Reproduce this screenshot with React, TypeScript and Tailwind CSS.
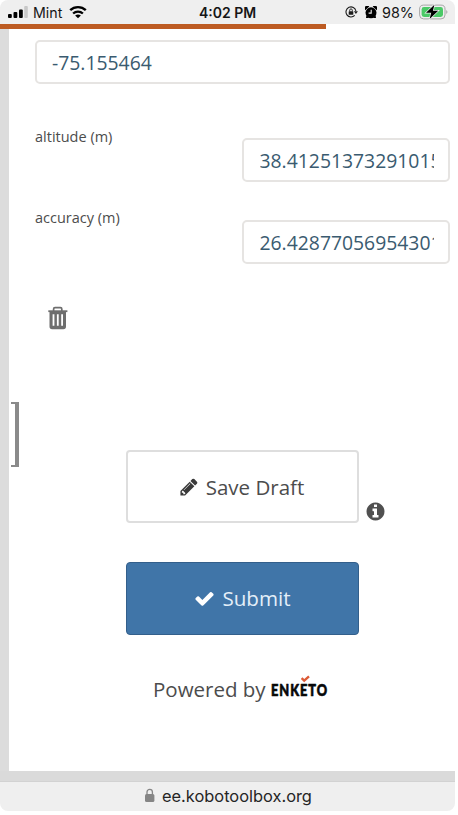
import type { ReactNode } from 'react';

function FaGlyph({ d, className }: { d: string; className: string }) {
  return (
    <svg viewBox="0 0 1792 1792" fill="currentColor" className={className}>
      <path d={d} />
    </svg>
  );
}

const PENCIL =
  'M491 1536l91-91-235-235-91 91v107h128v128h107zm523-928q0-22-22-22-10 0-17 7l-542 542q-7 7-7 17 0 22 22 22 10 0 17-7l542-542q7-7 7-17zm-54-192l416 416-832 832h-416v-416zm683 96q0 53-37 90l-166 166-416-416 166-165q36-38 90-38 53 0 91 38l235 234q37 39 37 91z';
const CHECK =
  'M1671 566q0 40-28 68l-724 724-136 136q-28 28-68 28t-68-28l-136-136-362-362q-28-28-28-68t28-68l136-136q28-28 68-28t68 28l294 295 656-657q28-28 68-28t68 28l136 136q28 28 28 68z';
const INFO =
  'M1152 1376v-160q0-14-9-23t-23-9h-96v-512q0-14-9-23t-23-9h-320q-14 0-23 9t-9 23v160q0 14 9 23t23 9h96v320h-96q-14 0-23 9t-9 23v160q0 14 9 23t23 9h448q14 0 23-9t9-23zm-128-896v-160q0-14-9-23t-23-9h-192q-14 0-23 9t-9 23v160q0 14 9 23t23 9h192q14 0 23-9t9-23zm640 416q0 209-103 385.5t-279.5 279.5-385.5 103-385.5-103-279.5-279.5-103-385.5 103-385.5 279.5-279.5 385.5-103 385.5 103 279.5 279.5 103 385.5z';

function StatusBar() {
  return (
    <header className="flex h-6 items-center rounded-t-lg bg-[#efefef] font-['Inter',sans-serif] text-[#161616]">
      <svg width="20" height="12" viewBox="0 0 20 12" className="ml-2">
        <rect x="0" y="8" width="3.8" height="4" rx="1" />
        <rect x="5.5" y="6" width="3.8" height="6" rx="1" />
        <rect x="11" y="3.5" width="3.8" height="8.5" rx="1" />
        <rect x="16.2" y="0" width="3.6" height="12" rx="1" fill="#c8c8c8" />
      </svg>
      <span className="ml-[5px] w-[30px] pt-px text-[14.2px] leading-6 whitespace-nowrap">Mint</span>
      <svg width="18" height="14" viewBox="0 0 18 14" fill="none" stroke="#000" className="ml-[6px]">
        <path d="M1.2 5.2a11.4 11.4 0 0 1 15.6 0" strokeWidth="2.4" />
        <path d="M4.1 8.5a7.2 7.2 0 0 1 9.8 0" strokeWidth="2.3" />
        <path d="M9 13.2 6.1 10.6a4.5 4.5 0 0 1 5.8 0z" fill="#000" stroke="none" />
      </svg>
      <span className="ml-[112px] w-[60px] pt-px text-[14px] font-semibold leading-6 whitespace-nowrap">4:02 PM</span>
      <svg width="13" height="12" viewBox="0 0 13 12" fill="none" stroke="#1c1c1c" className="ml-[86px]">
        <path d="M9.7 9.3A5 5 0 1 1 10.9 5" strokeWidth="1.1" />
        <path d="M8.9 5.3h4L10.9 8z" fill="#1c1c1c" stroke="none" />
        <rect x="3.7" y="5.2" width="4.6" height="3.6" rx=".6" fill="#1c1c1c" stroke="none" />
        <path d="M4.7 5.4V4.2a1.3 1.3 0 0 1 2.6 0v1.2" strokeWidth=".9" />
      </svg>
      <svg width="12" height="13" viewBox="0 0 12 13" className="ml-[7px]">
        <circle cx="6" cy="6.8" r="5.5" />
        <path d="M.2 4.2A2.6 2.6 0 0 1 4.3.6zM11.8 4.2A2.6 2.6 0 0 0 7.7.6zM1.4 9.6l-.4 2.4h3zM10.6 9.6l.4 2.4h-3z" />
        <path d="M6.2 3.8v3.3H3.6" fill="none" stroke="#efefef" strokeWidth="1.1" />
      </svg>
      <span className="ml-[5px] w-[32px] pt-px text-[14.4px] leading-6 whitespace-nowrap">98%</span>
      <svg width="30" height="16" viewBox="0 0 30 16" className="ml-[5px]">
        <rect x=".6" y="1.1" width="25.4" height="13.8" rx="4" fill="#efefef" stroke="#a6a6a6" />
        <rect x="2.6" y="3.1" width="21.4" height="9.8" rx="2.4" fill="#4bc967" />
        <path d="M27.4 6q2 2 0 4z" fill="#999" />
        <path d="M15.4.8 7 8.8h5.2L10.6 15 19.2 6.8h-5.3z" stroke="#efefef" strokeWidth="1.4" paintOrder="stroke" />
      </svg>
    </header>
  );
}

function Field({ children, className }: { children: ReactNode; className: string }) {
  return (
    <div className={`h-11 rounded-[5px] border-2 border-[#e6e4e2] bg-white pr-[14px] ${className}`}>
      <div className="overflow-hidden pt-px text-[19.35px] leading-10 whitespace-nowrap text-[#3a5b70]">{children}</div>
    </div>
  );
}

function TrashIcon() {
  return (
    <svg width="20" height="24" viewBox="0 0 20 24" className="text-[#6e6e6e]">
      <path d="M5.6 5V3q0-1.4 1.4-1.4h5.4Q13.8 1.6 13.8 3v2" fill="none" stroke="currentColor" strokeWidth="1.7" />
      <path d="M.3 4.3h19.1v1.8H.3z" fill="currentColor" />
      <path
        fillRule="evenodd"
        fill="currentColor"
        d="M1.5 6h16.5v14.5q0 2.8-2.6 2.8H4.1q-2.6 0-2.6-2.8zM4.6 8.2v11.6h1.8v-11.6zm4.3 0v11.6h1.8v-11.6zm4.3 0v11.6h1.8v-11.6z"
      />
    </svg>
  );
}

function EnketoLogo() {
  return (
    <svg width="57" height="28" viewBox="0 0 57 28" className="ml-[5px] overflow-visible">
      <text
        x="0"
        y="20.5"
        textLength="57"
        lengthAdjust="spacingAndGlyphs"
        letterSpacing="1.3"
        fontFamily="Lato, sans-serif"
        fontWeight="900"
        fontSize="17.8"
        fill="#080808"
        stroke="#080808"
        strokeWidth=".7"
        strokeLinejoin="round"
      >
        ENKETO
      </text>
      <path d="M30.6 3.2l2.6 2.4 4.8-4.2" fill="none" stroke="#dc5a36" strokeWidth="2.4" />
    </svg>
  );
}

export default function App() {
  return (
    <div className="h-[815px] w-[458px] overflow-hidden bg-white font-['Open_Sans','Noto_Sans',sans-serif] text-[#4c4c4c]">
      <div className="flex h-[811px] w-[455px] flex-col">
        <StatusBar />
        <div className="flex h-[747px] bg-[#dcdcdc]">
          <div className="w-full bg-white">
            <div className="h-[5px] w-[326px] bg-[#bd5b22]" />
            <div className="flex h-[742px]">
              <div className="w-[9px] shrink-0 bg-[#dcdcdc]" />
              <main className="flex grow flex-col">
                <Field className="mt-[11px] ml-[26px] w-[415px] pl-[15px]">-75.155464</Field>
                <div className="mt-[42px] ml-[26px] flex h-[57px] w-[415px] justify-between">
                  <span className="pt-px text-[14.5px] leading-5">altitude (m)</span>
                  <Field className="mt-[12px] w-[208px] pl-[15.5px]">38.41251373291015</Field>
                </div>
                <div className="mt-[25px] ml-[26px] flex h-[56px] w-[415px] justify-between">
                  <span className="text-[14.5px] leading-5">accuracy (m)</span>
                  <Field className="mt-[12px] w-[208px] pl-[15.5px]">26.42877056954301</Field>
                </div>
                <div className="mt-[42px] ml-[39px] h-6">
                  <TrashIcon />
                </div>
                <div className="mt-[72px] ml-[2px] h-[65px] w-2 border-y-2 border-r-4 border-[#8a8a8a]" />
                <div className="-mt-[17px] ml-[117px] flex items-end">
                  <button className="flex h-[73px] w-[233px] items-center justify-center gap-[7px] rounded-[4px] border-2 border-[#dedede] bg-white pt-px pr-[2px] text-[20.5px]">
                    <FaGlyph d={PENCIL} className="size-[20px] text-[#3a3a3a]" />
                    <span className="whitespace-nowrap">Save Draft</span>
                  </button>
                  <FaGlyph d={INFO} className="mb-px ml-[6px] size-[21px] text-[#505050]" />
                </div>
                <button className="mt-[39px] ml-[117px] flex h-[73px] w-[233px] items-center justify-center gap-[7px] rounded-[4px] border border-[#335f8b] bg-[#4075a8] text-[20.6px] text-[#e4eff8]">
                  <FaGlyph d={CHECK} className="size-[21px] text-white" />
                  <span>Submit</span>
                </button>
                <div className="mt-[38px] ml-[144px] flex h-8 items-center text-[20.5px] whitespace-nowrap">
                  <span>Powered by</span>
                  <EnketoLogo />
                </div>
              </main>
            </div>
          </div>
        </div>
        <div className="h-[10px] bg-[#dadada]" />
        <footer className="flex h-[30px] items-center rounded-b-lg border-t border-[#d2d2d2] bg-[#efefef] pb-[2px] font-['Inter',sans-serif] text-[#252525]">
          <svg width="10" height="15" viewBox="0 0 10 15" className="ml-[145px]">
            <rect x="0" y="6" width="9.4" height="8" rx="1.5" fill="#858585" />
            <path d="M2 6.5V4a2.7 2.7 0 0 1 5.4 0v2.5" fill="none" stroke="#858585" strokeWidth="1.3" />
          </svg>
          <span className="ml-[7px] text-[16.4px] leading-6 whitespace-nowrap">ee.kobotoolbox.org</span>
        </footer>
      </div>
    </div>
  );
}
